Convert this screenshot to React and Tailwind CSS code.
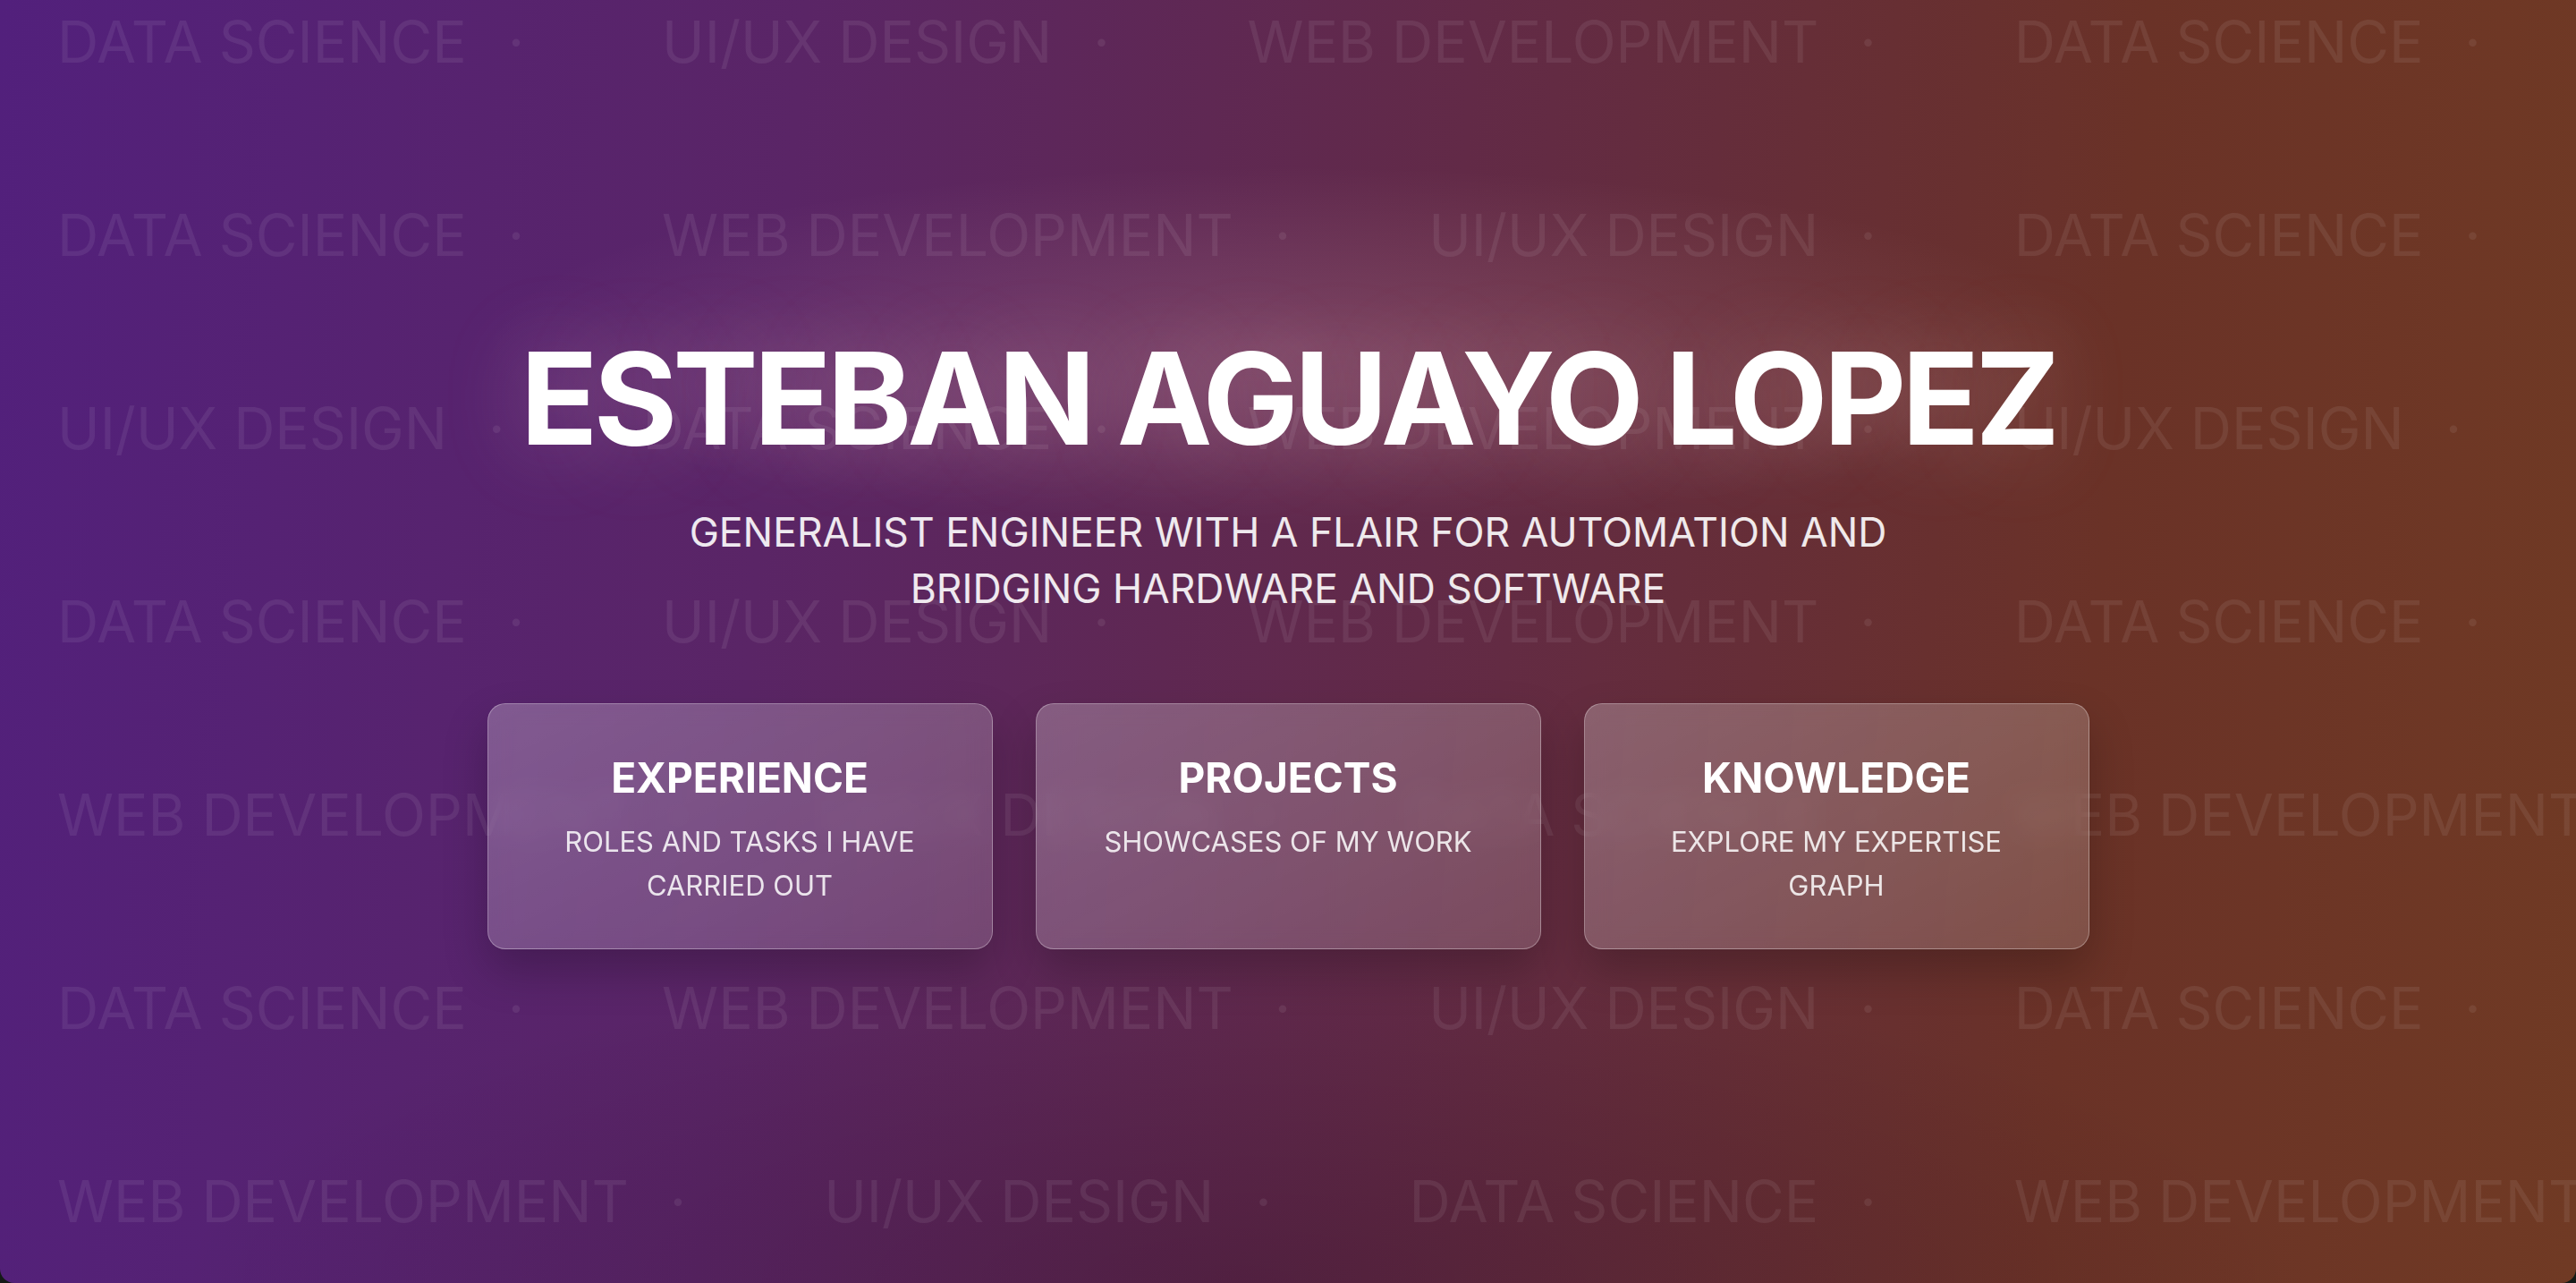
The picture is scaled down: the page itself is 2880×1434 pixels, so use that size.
import React from 'react';

const ROWS = [
  ['DATA SCIENCE', 'UI/UX DESIGN', 'WEB DEVELOPMENT', 'DATA SCIENCE', 'UI/UX DESIGN'],
  ['DATA SCIENCE', 'WEB DEVELOPMENT', 'UI/UX DESIGN', 'DATA SCIENCE', 'WEB DEVELOPMENT'],
  ['UI/UX DESIGN', 'DATA SCIENCE', 'WEB DEVELOPMENT', 'UI/UX DESIGN', 'DATA SCIENCE'],
  ['DATA SCIENCE', 'UI/UX DESIGN', 'WEB DEVELOPMENT', 'DATA SCIENCE', 'UI/UX DESIGN'],
  ['WEB DEVELOPMENT', 'UI/UX DESIGN', 'DATA SCIENCE', 'WEB DEVELOPMENT', 'UI/UX DESIGN'],
  ['DATA SCIENCE', 'WEB DEVELOPMENT', 'UI/UX DESIGN', 'DATA SCIENCE', 'WEB DEVELOPMENT'],
  ['WEB DEVELOPMENT', 'UI/UX DESIGN', 'DATA SCIENCE', 'WEB DEVELOPMENT', 'UI/UX DESIGN'],
];

const CARDS = [
  { title: 'EXPERIENCE', desc: 'ROLES AND TASKS I HAVE CARRIED OUT' },
  { title: 'PROJECTS', desc: 'SHOWCASES OF MY WORK' },
  { title: 'KNOWLEDGE', desc: 'EXPLORE MY EXPERTISE GRAPH' },
];

const App = () => {
  return (
    <div className="min-h-screen bg-[#151a17] font-['Inter',sans-serif]">
      <div className="relative h-screen w-full overflow-hidden rounded-b-2xl bg-[radial-gradient(ellipse_1250px_280px_at_50%_27%,rgba(255,200,205,0.17),transparent_72%),radial-gradient(ellipse_1700px_520px_at_48%_100%,rgba(25,0,20,0.22),transparent_70%),linear-gradient(95deg,#52207c_0%,#5a2566_30%,#622a47_55%,#6a3227_80%,#703a24_100%)]">
        {/* skills pattern behind the hero */}
        <div className="pointer-events-none absolute inset-0 flex select-none flex-col gap-[152px] pl-[64px] pt-[15px]">
          {ROWS.map((row, i) => (
            <div key={i} className="flex whitespace-nowrap text-[64px] leading-none text-white/[0.075]">
              {row.map((item, j) => (
                <span key={j} className="flex items-center">
                  <span>{item}</span>
                  <span className="ml-[46px] mr-[154px]">·</span>
                </span>
              ))}
            </div>
          ))}
        </div>

        <main className="relative flex h-full flex-col items-center justify-center text-center">
          <h1 className="text-[143px] font-bold leading-none tracking-[-0.035em] text-white [text-shadow:0_0_90px_rgba(255,215,225,0.25)]">
            ESTEBAN AGUAYO LOPEZ
          </h1>
          <p className="mt-12 max-w-[1400px] text-[44.5px] leading-[1.42] text-white/90">
            GENERALIST ENGINEER WITH A FLAIR FOR AUTOMATION AND
            <br />
            BRIDGING HARDWARE AND SOFTWARE
          </p>

          <div className="mt-24 flex gap-12">
            {CARDS.map((card) => (
              <NavCard key={card.title} title={card.title} desc={card.desc} />
            ))}
          </div>
        </main>
      </div>
    </div>
  );
};

const NavCard = ({ title, desc }) => (
  <div className="w-[565px] rounded-[20px] border border-white/30 bg-linear-to-br from-white/25 to-white/15 px-12 pb-[46px] pt-12 text-center shadow-[0_24px_50px_rgba(0,0,0,0.22)] backdrop-blur-md">
    <h2 className="text-[46px] font-bold leading-[1.5] text-white">{title}</h2>
    <p className="mt-3 text-[31px] leading-[49px] text-white/85">{desc}</p>
  </div>
);

export default App;
